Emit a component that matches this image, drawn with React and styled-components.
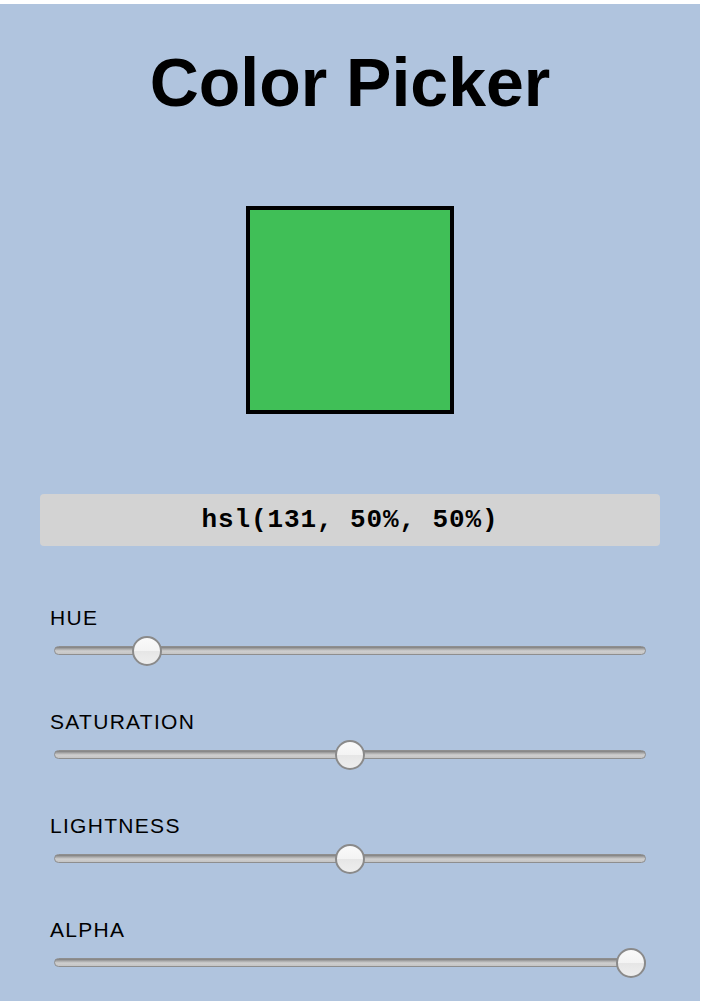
import React from 'react'
import styled, { createGlobalStyle } from 'styled-components'

const GlobalStyle = createGlobalStyle`
  html, body {
    margin: 0;
    padding: 0;
    background: #ffffff;
  }
  body {
    font-family: "Liberation Sans", Arial, sans-serif;
  }
`

const Panel = styled.div`
  margin-top: 4px;
  width: 700px;
  height: 997px;
  box-sizing: border-box;
  background: #b0c4de;
  padding: 44px 40px 0;
  display: flex;
  flex-direction: column;
`

const Title = styled.h1`
  margin: 0;
  font-size: 68px;
  line-height: 68px;
  font-weight: 700;
  text-align: center;
  color: #000;
`

const Swatch = styled.div`
  align-self: center;
  width: 200px;
  height: 200px;
  margin-top: 90px;
  border: 4px solid #000;
  background: ${(p) => p.$color};
`

const ColorCode = styled.div`
  margin-top: 80px;
  height: 52px;
  border-radius: 4px;
  background: #d3d3d3;
  display: flex;
  align-items: center;
  justify-content: center;
  font-family: "Liberation Mono", "Courier New", monospace;
  font-size: 26px;
  font-weight: 700;
  letter-spacing: 0.9px;
  color: #000;
`

const Controls = styled.div`
  margin-top: 60px;
  display: flex;
  flex-direction: column;
  gap: 44px;
`

const Field = styled.div`
  display: flex;
  flex-direction: column;
`

const Label = styled.label`
  padding-left: 10px;
  font-family: "Liberation Sans", Arial, sans-serif;
  font-size: 21px;
  line-height: 24px;
  letter-spacing: 1.3px;
  color: #000;
`

const SliderRow = styled.div`
  position: relative;
  margin: 6px 14px 0;
  height: 30px;
  display: flex;
  align-items: center;
`

const Track = styled.div`
  width: 100%;
  height: 9px;
  box-sizing: border-box;
  margin-top: -1px;
  border-radius: 5px;
  border: 1px solid #8e8e8e;
  background: linear-gradient(#7d7d7d 0px, #a9a9a9 2px, #cfcfcf 4px, #c4c4c4 100%);
`

const Thumb = styled.div`
  position: absolute;
  top: 0;
  width: 30px;
  height: 30px;
  box-sizing: border-box;
  border-radius: 50%;
  border: 2px solid #8a8a8a;
  background: linear-gradient(#fafafa 0%, #f3f3f3 50%, #e6e6e6 51%, #eeeeee 100%);
`

const sliders = [
  { name: 'HUE', pos: 0.139 },
  { name: 'SATURATION', pos: 0.5 },
  { name: 'LIGHTNESS', pos: 0.5 },
  { name: 'ALPHA', pos: 1 },
]

export default function App() {
  const color = 'hsl(131, 50%, 50%)'
  return (
    <>
      <GlobalStyle />
      <Panel>
        <Title>Color Picker</Title>
        <Swatch $color={color} />
        <ColorCode>{color}</ColorCode>
        <Controls>
          {sliders.map((s) => (
            <Field key={s.name}>
              <Label>{s.name}</Label>
              <SliderRow>
                <Track />
                <Thumb style={{ left: `calc(${s.pos} * (100% - 30px))` }} />
              </SliderRow>
            </Field>
          ))}
        </Controls>
      </Panel>
    </>
  )
}
